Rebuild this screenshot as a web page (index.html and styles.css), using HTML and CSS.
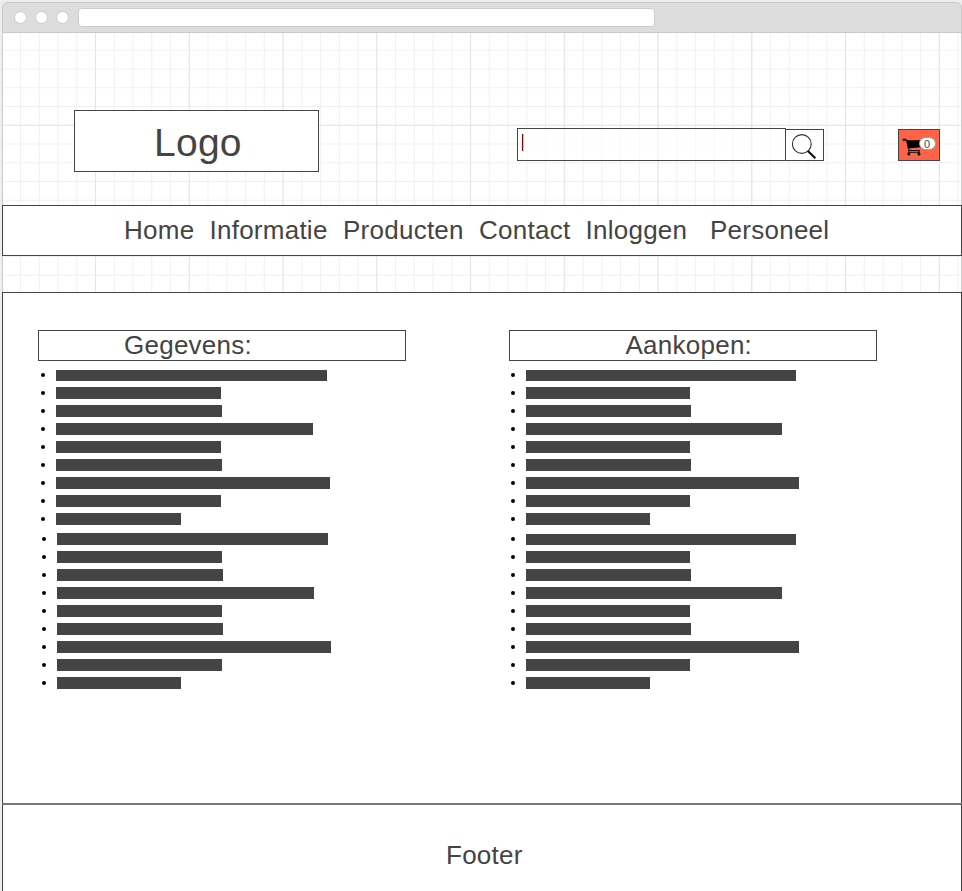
FILE: index.html
```html
<!DOCTYPE html>
<html lang="nl">
<head>
<meta charset="utf-8">
<title>Gegevens en aankopen</title>
<link rel="stylesheet" href="styles.css">
</head>
<body>
<div class="window">
  <div class="chrome">
    <span class="dot"></span><span class="dot"></span><span class="dot"></span>
    <div class="address"></div>
  </div>
  <div class="page">
    <svg class="grid" width="958" height="260" aria-hidden="true">
      <defs>
        <pattern id="minor" x="-1.7" y="-2" width="18.75" height="18.75" patternUnits="userSpaceOnUse"><path d="M0 .5H18.75M.5 0V18.75" stroke="#f0f0f0" fill="none"/></pattern>
        <pattern id="major" x="-1.7" y="-2" width="93.75" height="93.75" patternUnits="userSpaceOnUse"><path d="M0 .5H93.75M.5 0V93.75" stroke="#e4e4e4" fill="none"/></pattern>
      </defs>
      <rect width="958" height="260" fill="url(#minor)"/>
      <rect width="958" height="260" fill="url(#major)"/>
    </svg>
    <header class="header">
      <div class="logo">Logo</div>
      <div class="search"><span class="caret"></span></div>
      <div class="search-button">
        <svg width="37" height="30" viewBox="0 0 37 30"><circle cx="15.8" cy="14" r="9.4" fill="#fff" stroke="#333" stroke-width="1.1"/><path d="M21.7 20.8L29.3 28.2" stroke="#111" stroke-width="2.2"/></svg>
      </div>
      <div class="cart">
        <svg width="40" height="30" viewBox="0 0 40 30"><path d="M4 9.4H7.3L9.8 18.5M9.8 20.5H20.8M9.8 22.3H20.8M9.8 18V24M20 20V24" fill="none" stroke="#111" stroke-width="1"/><path d="M3.6 8.8H7V10.6H3.6Z"/><path d="M7.3 10.3H22V17.3L8.8 18.6Z"/><circle cx="9.8" cy="24" r="1.5"/><circle cx="20" cy="24" r="1.5"/></svg>
        <span class="badge">0</span>
      </div>
    </header>
    <nav class="nav"><a>Home</a><a>Informatie</a><a>Producten</a><a>Contact</a><a>Inloggen</a><a>Personeel</a></nav>
    <div class="gap"></div>
    <main class="main">
      <section class="column">
        <h2 class="title">Gegevens:</h2>
        <ul class="list first">
          <li><i class="w271 thin"></i></li><li><i class="w165"></i></li><li><i class="w166"></i></li><li><i class="w257"></i></li><li><i class="w165"></i></li><li><i class="w166"></i></li><li><i class="w274"></i></li><li><i class="w165"></i></li><li><i class="w125"></i></li>
        </ul>
        <ul class="list shifted">
          <li><i class="w271"></i></li><li><i class="w165"></i></li><li><i class="w166"></i></li><li><i class="w257"></i></li><li><i class="w165"></i></li><li><i class="w166"></i></li><li><i class="w274"></i></li><li><i class="w165"></i></li><li><i class="w124"></i></li>
        </ul>
      </section>
      <section class="column purchases">
        <h2 class="title">Aankopen:</h2>
        <ul class="list first">
          <li><i class="w270 thin"></i></li><li><i class="w164"></i></li><li><i class="w165"></i></li><li><i class="w256"></i></li><li><i class="w164"></i></li><li><i class="w165"></i></li><li><i class="w273"></i></li><li><i class="w164"></i></li><li><i class="w124"></i></li>
        </ul>
        <ul class="list">
          <li><i class="w270 thin"></i></li><li><i class="w164"></i></li><li><i class="w165"></i></li><li><i class="w256"></i></li><li><i class="w164"></i></li><li><i class="w165"></i></li><li><i class="w273"></i></li><li><i class="w164"></i></li><li><i class="w124"></i></li>
        </ul>
      </section>
    </main>
    <footer class="footer">Footer</footer>
  </div>
</div>
</body>
</html>
```
FILE: styles.css
```css
* { box-sizing: border-box; }
body {
  margin: 0;
  height: 891px;
  overflow: hidden;
  padding: 2px 0 0 2px;
  background: #eee;
  color: #444;
  font: 26px/30px "Liberation Sans", Arial, sans-serif;
  letter-spacing: .25px;
}
.window { width: 960px; height: 889px; background: #fff; border-radius: 5px 5px 0 0; }
.chrome {
  height: 31px;
  display: flex;
  align-items: center;
  padding-left: 11px;
  background: #ddd;
  border: 1px solid #c8c8c8;
  border-radius: 5px 5px 0 0;
}
.dot { width: 13px; height: 13px; margin-right: 8px; background: #fff; border: 1px solid #ccc; border-radius: 50%; }
.dot:nth-child(2) { margin-right: 7.5px; }
.dot:nth-child(3) { margin-right: 9.5px; }
.address { width: 577px; height: 19px; background: #fff; border: 1px solid #ccc; border-radius: 4px; }
.page { position: relative; isolation: isolate; }
.grid { position: absolute; z-index: -1; left: 1px; top: 0; }
.header {
  height: 172px;
  display: flex;
  align-items: flex-start;
  padding: 77px 0 0 71px;
  border: solid #ccc;
  border-width: 0 1px;
}
.logo {
  width: 245px;
  height: 62px;
  border: 1px solid #444;
  background: #fff;
  padding-left: 79px;
  font-size: 39px;
  line-height: 64px;
}
.search { width: 269px; height: 33px; margin: 18px 0 0 198px; border: 1px solid #444; padding: 5px 4px; background: rgba(255,255,255,.5); }
.caret { display: block; width: 2px; height: 17px; border-left: 1px solid #8b0000; background: #b5cdf0; }
.search-button { width: 39px; height: 32px; margin: 19px 0 0 -1px; border: 1px solid #444; background: #fff; }
.cart { position: relative; width: 42px; height: 32px; margin: 19px 0 0 74px; border: 1px solid #444; background: #ff6347; }
svg { display: block; }
.badge {
  position: absolute;
  left: 20px;
  top: 7px;
  width: 17px;
  height: 13px;
  border: 1px solid #999;
  border-radius: 7px;
  background: #fff;
  font-size: 11px;
  line-height: 12px;
  letter-spacing: 0;
  text-align: center;
  padding-right: 1px;
}
.nav {
  height: 51px;
  display: grid;
  grid-template-columns: 85.5px 133.5px 136px 106.5px 124.5px 1fr;
  padding-left: 121px;
  border: 1px solid #444;
  background: #fff;
  line-height: 49px;
}
.gap { height: 36px; border: solid #ccc; border-width: 0 1px; }
.main { height: 511px; display: flex; padding: 37px 0 0 35px; border: 1px solid #444; border-bottom: 0; background: #fff; }
.column { width: 368px; }
.purchases { margin-left: 103px; }
.title { height: 31px; margin: 0; padding-left: 85px; border: 1px solid #444; font-size: 26px; font-weight: 400; line-height: 29px; }
.purchases .title { padding-left: 115.5px; }
.list { margin: 0; padding: 2px 0 0 3px; list-style: none; }
.list.first { padding-top: 8px; }
.purchases .list { padding-left: 2px; }
.shifted { padding-left: 4px; }
.list li { height: 18px; display: flex; align-items: flex-start; }
.list li::before { content: ""; width: 4px; height: 4px; margin: 4px 11px 0 0; border-radius: 50%; background: #000; }
.list i { height: 12px; background: #444; }
.list .thin { height: 11px; margin-top: 1px; }
.w124 { width: 124px; }
.w125 { width: 125px; }
.w164 { width: 164px; }
.w165 { width: 165px; }
.w166 { width: 166px; }
.w256 { width: 256px; }
.w257 { width: 257px; }
.w270 { width: 270px; }
.w271 { width: 271px; }
.w273 { width: 273px; }
.w274 { width: 274px; }
.footer { height: 88px; border: 1px solid #444; border-top: 2px solid #777; border-bottom: 0; background: #fff; padding: 35px 0 0 443px; }
```
